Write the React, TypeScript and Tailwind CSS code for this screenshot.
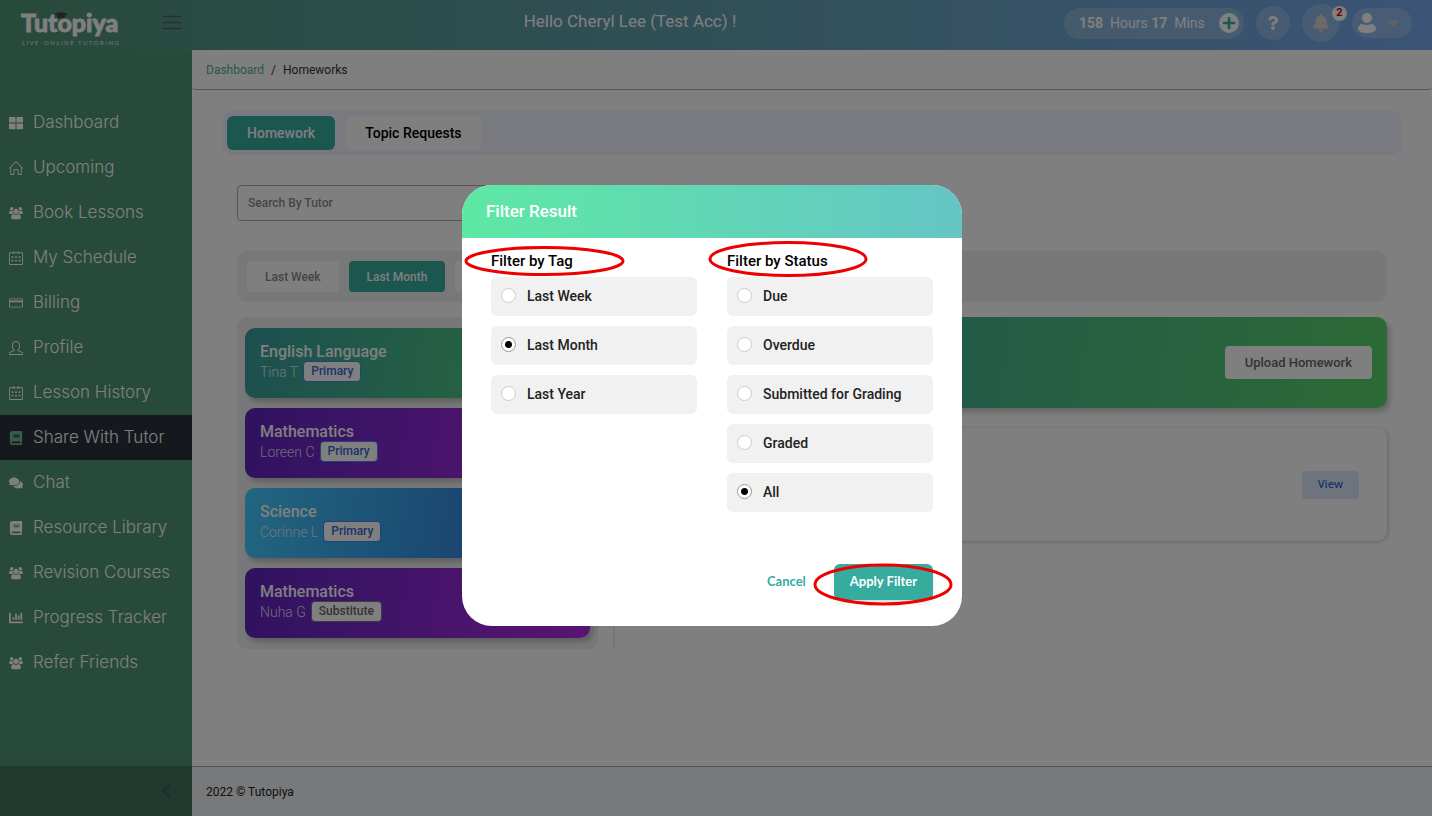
import { useState, type ComponentType, type ReactNode } from 'react';
import {
  FaBell,
  FaBook,
  FaCaretDown,
  FaChartBar,
  FaChevronLeft,
  FaComments,
  FaPlus,
  FaQuestion,
  FaThLarge,
} from 'react-icons/fa';
import { SlCalender, SlCreditCard, SlHome, SlUser } from 'react-icons/sl';

type MenuItem = { label: string; icon: ComponentType<{ className?: string }>; active?: boolean };

function PeopleIcon({ className }: { className?: string }) {
  return (
    <svg viewBox="0 0 16 16" fill="currentColor" className={className}>
      <circle cx="3" cy="3" r="2" />
      <circle cx="13" cy="3" r="2" />
      <circle cx="8" cy="6" r="3" />
      <path d="M0 8c0-2 1-2.700 2-2.700 1 .6 1.800.6 2.500.3C4.200 7 4.600 8 5.200 9H1.500C.6 9 0 8.600 0 8Z" />
      <path d="M16 8c0-2-1-2.700-2-2.700-1 .6-1.800.6-2.500.3.3 1.400-.1 2.400-.7 3.400h3.700C15.400 9 16 8.600 16 8Z" />
      <path d="M2.500 13c0-2.500 1-4 2.700-4 1.800 1.300 3.800 1.300 5.600 0 1.700 0 2.700 1.500 2.700 4 0 1.200-.8 2-2 2h-7c-1.200 0-2-.8-2-2Z" />
    </svg>
  );
}

const MENU: MenuItem[] = [
  { label: 'Dashboard', icon: FaThLarge },
  { label: 'Upcoming', icon: SlHome },
  { label: 'Book Lessons', icon: PeopleIcon },
  { label: 'My Schedule', icon: SlCalender },
  { label: 'Billing', icon: SlCreditCard },
  { label: 'Profile', icon: SlUser },
  { label: 'Lesson History', icon: SlCalender },
  { label: 'Share With Tutor', icon: FaBook, active: true },
  { label: 'Chat', icon: FaComments },
  { label: 'Resource Library', icon: FaBook },
  { label: 'Revision Courses', icon: PeopleIcon },
  { label: 'Progress Tracker', icon: FaChartBar },
  { label: 'Refer Friends', icon: PeopleIcon },
];

const SUBJECTS = [
  { subject: 'English Language', tutor: 'Tina T', tag: 'Primary', bg: 'from-[#3a9ea0] to-[#58d66a]' },
  { subject: 'Mathematics', tutor: 'Loreen C', tag: 'Primary', bg: 'from-[#5e24c0] to-[#b426e8]' },
  { subject: 'Science', tutor: 'Corinne L', tag: 'Primary', bg: 'from-[#44ccff] to-[#3068d0]' },
  { subject: 'Mathematics', tutor: 'Nuha G', tag: 'Substitute', bg: 'from-[#5e24c0] to-[#b426e8]' },
];

const TAGS = ['Last Week', 'Last Month', 'Last Year'];
const STATUSES = ['Due', 'Overdue', 'Submitted for Grading', 'Graded', 'All'];

function Logo() {
  return (
    <a href="#" aria-label="Tutopiya" className="ml-5 pt-1">
      <svg viewBox="0 0 104 44" className="h-11 w-[104px]" fill="#fff">
        <text
          x="1"
          y="28"
          fontFamily="Lato, sans-serif"
          fontWeight="900"
          fontSize="25"
          stroke="#fff"
          strokeWidth=".8"
          strokeLinejoin="round"
        >
          Tutopiya
        </text>
        <path d="M34 10 L41 8 L48 10 L45 11.500 V13.500 Q41 15 37 13.500 V11.500 Z" fill="#44444c" />
        <g fontFamily="Lato, sans-serif" fontSize="6" opacity=".8">
          <text x="2" y="41">L I V E</text>
          <text x="24" y="41">O N L I N E</text>
          <text x="58" y="41">T U T O R I N G</text>
        </g>
      </svg>
    </a>
  );
}

function Header() {
  return (
    <header className="flex h-[50px] items-center bg-linear-to-r from-[#509474] to-[#78a8ec] pr-5 text-white">
      <div className="flex h-full w-48 shrink-0 items-start justify-between pr-[10px]">
        <Logo />
        <button aria-label="Toggle menu" className="mt-[15px]">
          <svg width="20" height="16" viewBox="0 0 20 16" stroke="#4c5878" strokeWidth="1.5" strokeLinecap="round">
            <path d="M1.500 1.500h17M1.500 7.500h17M1.500 13.500h17" />
          </svg>
        </button>
      </div>
      <h1 className="flex-1 pb-1.5 pl-1 text-center text-[17px] font-normal">Hello Cheryl Lee (Test Acc) !</h1>
      <div className="flex items-center pb-1">
        <div className="mr-3 flex h-[31px] w-[180px] items-center justify-between rounded-full bg-white/20 pr-[5px] pl-[15px] text-sm">
          <span>
            <b>158</b>&nbsp; Hours <b>17</b>&nbsp; Mins
          </span>
          <button aria-label="Add hours" className="flex size-5 items-center justify-center rounded-full bg-white">
            <FaPlus className="text-sm text-[#36ac9f]" />
          </button>
        </div>
        <button aria-label="Help" className="mr-3 flex size-[34px] items-center justify-center rounded-full bg-white/20">
          <FaQuestion className="text-sm" />
        </button>
        <button
          aria-label="Notifications"
          className="relative mr-3 flex size-[38px] items-center justify-center rounded-full bg-white/20"
        >
          <FaBell className="text-lg text-[#d8d4cc]" />
          <span className="absolute top-0.5 -right-[7px] flex size-[15px] items-center justify-center rounded-full bg-white text-[11px] font-bold text-[#d80020]">
            2
          </span>
        </button>
        <button
          aria-label="Account"
          className="flex h-[30px] w-[60px] items-center justify-between rounded-full bg-white/20 pr-[10px] pl-1.5"
        >
          <svg width="18" height="20" viewBox="0 0 18 20" fill="#fff">
            <circle cx="9" cy="5" r="5" />
            <path d="M0 16 C0 12.500 2.500 11 4.500 11 Q9 13.200 13.500 11 C15.500 11 18 12.500 18 16 C17 19 14 20 9 20 S1 19 0 16Z" />
          </svg>
          <FaCaretDown className="text-lg text-[#c8c4b8]" />
        </button>
      </div>
    </header>
  );
}

function Sidebar() {
  return (
    <aside className="flex w-48 shrink-0 flex-col bg-[#509474] text-white">
      <nav className="flex-1 pt-[50px]">
        {MENU.map(({ label, icon: Icon, active }) => (
          <a
            key={label}
            href="#"
            className={`flex h-[45px] items-center gap-[10px] pl-[9px] font-[Inter,sans-serif] text-[17px] font-light whitespace-nowrap ${
              active ? 'bg-[#2a323c]' : ''
            }`}
          >
            <Icon className={`size-[14px] shrink-0 ${active ? 'text-[#6cb894]' : ''}`} />
            {label}
          </a>
        ))}
      </nav>
      <button aria-label="Collapse sidebar" className="flex h-[50px] items-center justify-end bg-black/20 pr-[18px]">
        <FaChevronLeft className="text-base text-[#4c5464]" />
      </button>
    </aside>
  );
}

function SubjectCard({ subject, tutor, tag, bg }: (typeof SUBJECTS)[number]) {
  return (
    <div className={`h-[70px] rounded-[10px] bg-linear-100 px-[15px] pt-[14px] text-white shadow-[3px_4px_5px_rgba(0,0,0,0.2)] ${bg}`}>
      <div className="text-base leading-[19px] font-medium">{subject}</div>
      <div className="flex items-center gap-[5px]">
        <span className="text-sm leading-5 font-light opacity-80">{tutor}</span>
        <span
          className={`rounded border bg-white px-[7px] text-xs leading-[19px] font-medium ${
            tag === 'Primary' ? 'border-[#4a80e8] text-[#3868d0]' : 'border-[#777] text-[#666]'
          }`}
        >
          {tag}
        </span>
      </div>
    </div>
  );
}

function Content() {
  return (
    <div className="flex-1 px-[30px] pt-[21px] font-medium">
      <div className="flex gap-[10px] rounded-[10px] bg-[#f2f4ff] p-[5px]">
        <button className="h-[34px] rounded-md bg-[#36ac9f] px-5 text-sm text-white">Homework</button>
        <button className="h-[34px] rounded-md bg-white px-5 text-sm text-black">Topic Requests</button>
      </div>
      <div className="px-[15px] pt-[30px]">
        <input
          aria-label="Search By Tutor"
          placeholder="Search By Tutor"
          className="block h-9 w-[361px] rounded-sm border border-[#aaa] px-[10px] text-xs placeholder:text-[#8c8c8c]"
        />
        <div className="mt-[30px] flex gap-[10px] rounded-[10px] bg-[#f0f0f0] p-[10px] text-xs">
          <button className="h-[31px] rounded bg-white px-[18px] text-[#888]">Last Week</button>
          <button className="h-[31px] rounded bg-[#36ac9f] px-[18px] text-white">Last Month</button>
          <button className="h-[31px] rounded bg-white px-[18px] text-[#888]">Last Year</button>
        </div>
        <div className="mt-[15px] flex">
          <div className="flex w-[361px] shrink-0 flex-col gap-[10px] rounded-[10px] bg-[#f0f0f0] px-2 py-[11px]">
            {SUBJECTS.map((s) => (
              <SubjectCard key={s.tutor} {...s} />
            ))}
          </div>
          <div className="ml-[15px] flex-1 border-l-2 border-[#eaeaea] pl-[15px]">
            <div className="flex h-[91px] items-center justify-end rounded-[10px] bg-linear-100 from-[#3a9ea0] to-[#58d66a] pr-[15px] shadow-[3px_4px_5px_rgba(0,0,0,0.2)]">
              <button className="h-[33px] min-w-[147px] rounded bg-white px-5 text-[13px] text-[#666]">Upload Homework</button>
            </div>
            <div className="mt-5 flex h-[113px] items-center justify-end rounded-[10px] bg-white pr-7 shadow-[1px_1px_4px_rgba(0,0,0,0.2)]">
              <button className="h-7 rounded bg-[#dce8fc] px-4 font-[Open_Sans,sans-serif] text-[11px] font-semibold text-[#3868d0]">
                View
              </button>
            </div>
          </div>
        </div>
      </div>
    </div>
  );
}

type FilterGroupProps = {
  title: ReactNode;
  name: string;
  options: string[];
  value: string;
  onChange: (value: string) => void;
};

function FilterGroup({ title, name, options, value, onChange }: FilterGroupProps) {
  return (
    <fieldset className="flex-1">
      <legend className="pb-1.5 text-[15px] leading-5 text-black">{title}</legend>
      <div className="flex flex-col gap-[10px]">
        {options.map((option) => (
          <label
            key={option}
            className="flex items-center gap-[11px] rounded-md bg-[#f1f1f1] px-[10px] pt-[9px] pb-[10px] text-sm leading-5 text-[#222]"
          >
            <input
              type="radio"
              name={name}
              checked={value === option}
              onChange={() => onChange(option)}
              className="size-[15px] appearance-none rounded-full border border-[#ccc] bg-white checked:border-[#999] checked:bg-[radial-gradient(circle,#000_3px,#fff_4px)]"
            />
            {option}
          </label>
        ))}
      </div>
    </fieldset>
  );
}

function FilterModal() {
  const [tag, setTag] = useState('Last Month');
  const [status, setStatus] = useState('All');

  return (
    <div className="fixed inset-0 flex items-center justify-center bg-black/50 pr-2 pb-1.5">
      <form
        role="dialog"
        aria-label="Filter Result"
        className="relative w-[500px] rounded-[30px] bg-white font-medium"
        onSubmit={(e) => e.preventDefault()}
      >
        <h2 className="rounded-t-[30px] bg-linear-to-r from-[#5de8a3] to-[#65c5c5] px-6 pt-[14px] pb-[15px] text-[17px] leading-6 text-white">
          Filter Result
        </h2>
        <div className="flex items-start gap-[30px] px-[29px] pt-[13px]">
          <FilterGroup title="Filter by Tag" name="tag" options={TAGS} value={tag} onChange={setTag} />
          <FilterGroup title="Filter by Status" name="status" options={STATUSES} value={status} onChange={setStatus} />
        </div>
        <div className="flex justify-end gap-3 px-[29px] pt-[52px] pb-[26px] font-[Lato,sans-serif] text-[13px] font-bold">
          <button type="button" className="h-9 px-4 text-[#36ac9f]">
            Cancel
          </button>
          <button type="submit" className="h-9 rounded-md bg-[#36ac9f] px-4 text-white shadow-md">
            Apply Filter
          </button>
        </div>
        <svg
          viewBox="0 0 500 441"
          className="pointer-events-none absolute top-0 left-0 h-[441px] w-[500px]"
          fill="none"
          stroke="#ec0000"
          strokeWidth="3"
        >
          <ellipse cx="82.500" cy="76" rx="78.500" ry="13.500" />
          <ellipse cx="326" cy="74" rx="78" ry="16.500" />
          <ellipse cx="421" cy="399.500" rx="68" ry="19.500" />
        </svg>
      </form>
    </div>
  );
}

export default function App() {
  return (
    <div className="flex min-h-screen flex-col bg-white font-[Roboto,sans-serif]">
      <Header />
      <div className="flex flex-1">
        <Sidebar />
        <main className="flex min-w-0 flex-1 flex-col">
          <nav className="flex h-10 items-center gap-[7px] rounded-b border-b border-[#9cb0bc] px-[14px] text-xs text-[#333]">
            <a href="#" className="text-[#50b08c]">
              Dashboard
            </a>
            <span>/</span>
            <span>Homeworks</span>
          </nav>
          <Content />
          <footer className="flex h-[50px] items-center border-t border-[#90acac] bg-[#f0f3f5] px-[14px] text-xs text-[#222]">
            2022 © Tutopiya
          </footer>
        </main>
      </div>
      <FilterModal />
    </div>
  );
}
